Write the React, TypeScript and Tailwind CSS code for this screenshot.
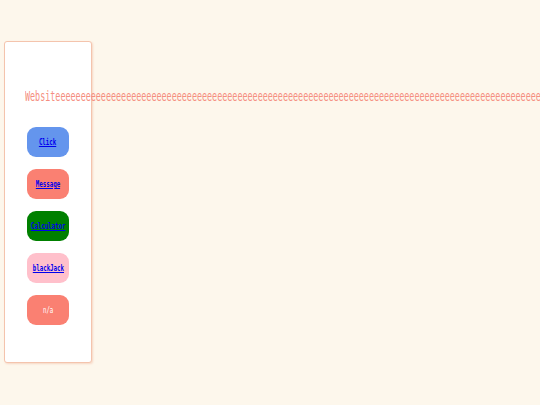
import React from "react";

const mono = { fontFamily: '"DejaVu Sans Mono", "Liberation Mono", monospace' };

const links = [
  { label: "Click", bg: "bg-[#6495ed]", link: true },
  { label: "Message", bg: "bg-[#fa8072]", link: true },
  { label: "Calculator", bg: "bg-[#008000]", link: true },
  { label: "blackJack", bg: "bg-[#ffc0cb]", link: true },
  { label: "n/a", bg: "bg-[#fa8072]", link: false },
];

export default function App() {
  return (
    <div className="relative h-[405px] w-[540px] overflow-hidden bg-[#fdf7ec]" style={mono}>
      <div className="pl-1 pt-[41px]">
        <nav className="flex h-[322px] w-[88px] flex-col items-center gap-3 rounded-[3px] border border-[#f4c4ad] bg-white pt-[85px] shadow-[1px_1px_2px_rgba(240,170,140,0.4)]">
          {links.map((l) => (
            <div
              key={l.label}
              className={`flex h-[30px] w-[42px] items-center justify-center rounded-[9px] pt-[2px] ${l.bg}`}
            >
              {l.link ? (
                <a
                  href="#"
                  className="inline-block origin-center scale-x-[0.64] whitespace-nowrap text-[9px] font-bold text-[#0000ee] underline"
                >
                  {l.label}
                </a>
              ) : (
                <span className="inline-block origin-center scale-x-[0.64] whitespace-nowrap text-[9px] text-white">
                  {l.label}
                </span>
              )}
            </div>
          ))}
        </nav>
      </div>
      <h1 className="absolute left-[25px] top-[88px] origin-left scale-x-[0.6] whitespace-nowrap text-[14px] font-normal leading-4 text-[#f58e80]">
        Websiteeeeeeeeeeeeeeeeeeeeeeeeeeeeeeeeeeeeeeeeeeeeeeeeeeeeeeeeeeeeeeeeeeeeeeeeeeeeeeeeeeeeeeeeeeeeeeeeeeeeeeeeeeeeeeeeeeeeeeeeeeeeeeeeeeeeee
      </h1>
    </div>
  );
}
